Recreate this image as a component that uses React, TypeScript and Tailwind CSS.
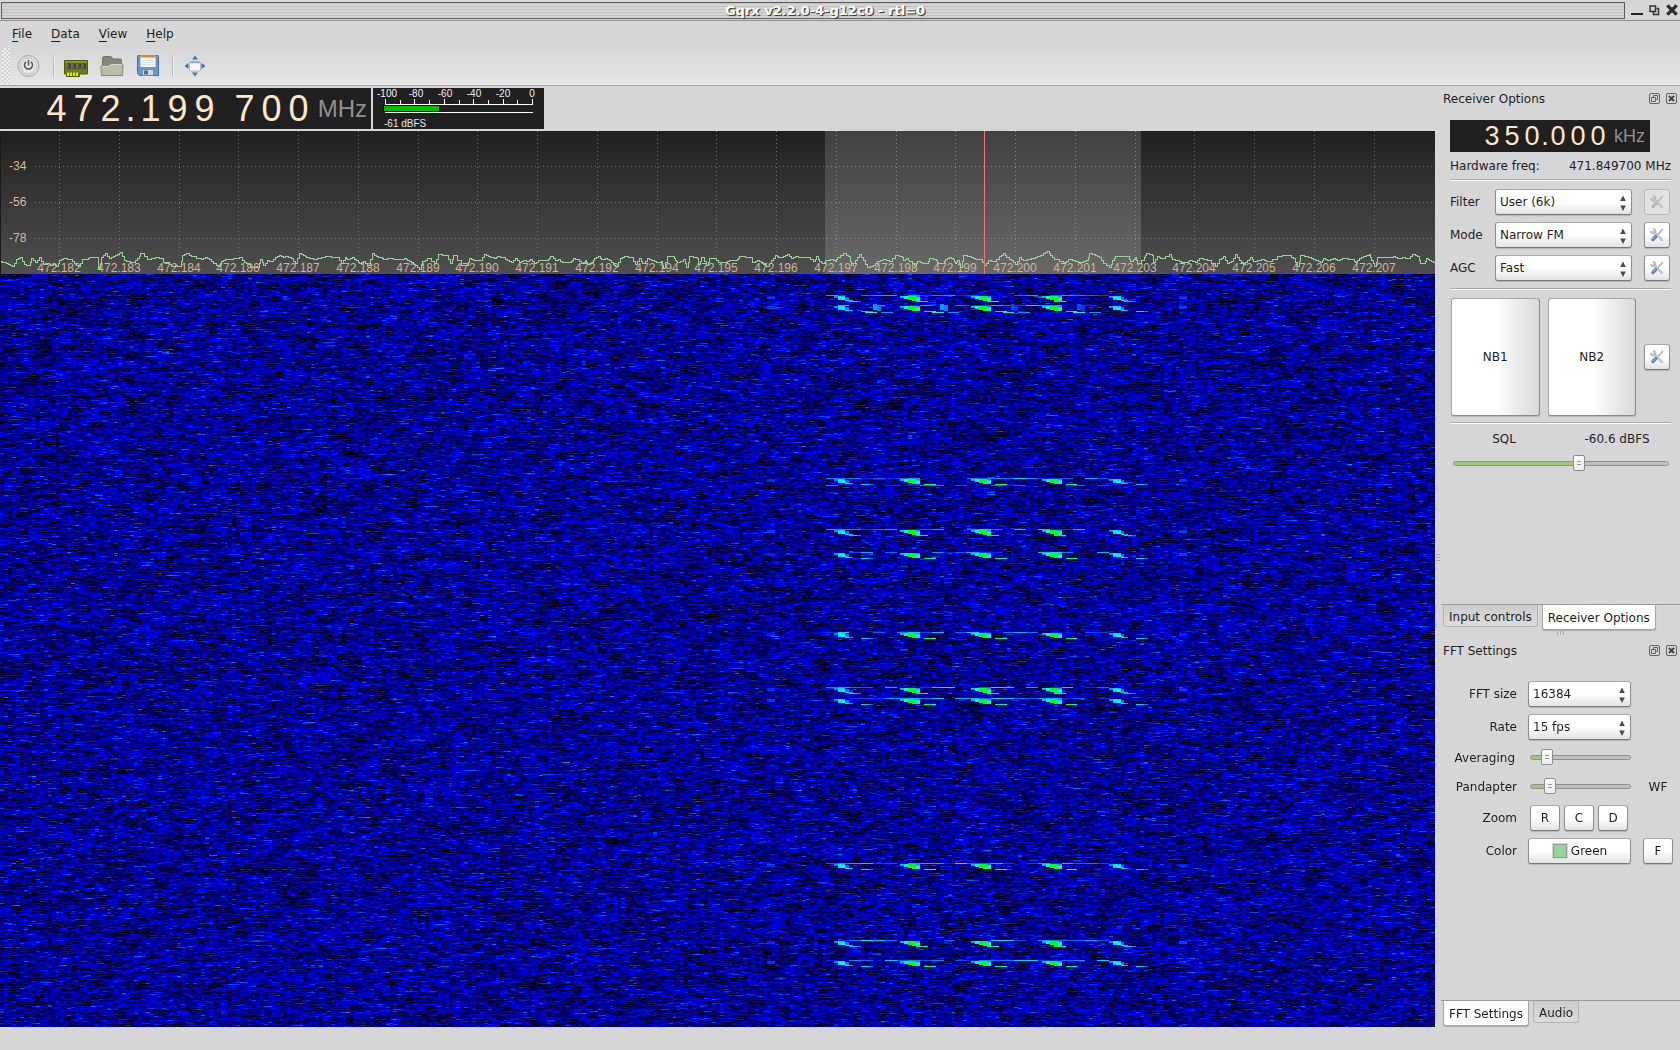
import React, { useEffect, useRef, useState } from "react";

/* ---------- spectrum trace ---------- */
type Segment = { x: number; y: number; pts: string };

const SEGMENTS: Segment[] = [
  {
    x: 0,
    y: -1,
    pts: "0,392 12,396 24,402 36,407 48,388 60,382 72,402 84,405 94,385 106,395 118,380 130,403 142,400 150,405 158,402 168,408 178,390 190,385 210,388 222,398 234,408 246,388 260,386 268,380 290,382 293,415 304,382 316,370 326,383 340,377 352,372 360,367 371,390 380,392 400,396 412,385 421,370 440,388 452,384 466,380 488,388 490,395 500,396 512,408 524,406 536,408 546,375 558,370 572,378 604,388 616,382 628,388 640,398 654,408 662,394 676,388 700,384 716,382 732,396 744,402 756,410 770,412 780,386 790,406 800,390 812,392 824,380 836,375 848,382 856,378 872,384 884,400 896,370 908,374 918,380 932,384 942,388 952,384 974,378 1008,382 1022,400 1034,380 1042,386 1056,380 1068,390 1078,400 1090,392 1102,406 1116,370 1128,378 1140,380 1150,388 1162,384 1198,388 1212,384 1222,390 1234,396 1246,404 1258,418 1266,392 1280,384 1302,400 1314,372 1336,376 1350,400 1360,376 1382,405 1400,404 1408,384 1420,390",
  },
  {
    x: 460,
    y: 104,
    pts: "60,76 72,58 84,62 96,66 104,68 110,62 126,66 140,74 154,80 164,68 176,80 188,74 204,78 210,72 222,84 234,76 264,72 270,62 284,74 294,72 306,80 334,78 340,68 350,72 362,84 376,74 382,88 392,80 402,70 414,64 424,72 434,70 446,76 460,84 466,92 480,68 492,62 514,66 524,88 538,70 546,84 560,70 574,76 588,82 604,78 608,98 620,64 640,62 644,76 652,80 668,72 678,96 688,64 710,70 714,88 724,66 738,90 748,68 762,70 774,80 796,82 808,76 830,72 838,64 872,66 876,80 890,74 902,82 914,90 920,92 932,74 944,60 954,66 968,62 980,58 992,68 1006,64",
  },
  {
    x: 800,
    y: 109,
    pts: "0,50 18,52 38,62 48,48 58,62 66,70 76,60 90,58 104,62 112,50 130,38 144,48 154,74 164,60 178,42 190,60 202,80 220,76 232,64 248,56 268,62 284,44 306,50 308,60 318,54 328,62 342,76 352,62 366,70 378,68 388,54 408,60 414,70 430,68 436,58 446,50 458,58 464,70 472,60 480,80 490,44 512,52 524,56 540,58 552,76 564,60 580,62 598,48 610,38 618,52 632,60 644,72 656,50 668,60 692,54 704,50 712,48 730,40 740,34 750,44 762,58 790,66 804,56 824,62 840,66 858,60 866,40 884,46 898,52 910,68 926,80 936,60 944,48 980,48 990,64 1004,52 1010,68 1032,50 1038,38 1056,44 1060,66 1070,48",
  },
  {
    x: 1160,
    y: 104,
    pts: "0,70 26,58 36,72 50,74 62,80 78,82 88,76 104,82 118,70 140,74 166,92 176,72 190,64 202,84 214,78 224,58 236,74 250,86 262,76 270,66 280,78 292,74 304,72 318,78 350,64 366,60 386,60 400,68 410,92 420,60 444,66 460,72 468,76 480,80 490,68 502,74 520,68 530,74 546,70 578,72 586,82 596,70 608,62 626,58 634,76 642,92 652,66 700,64 710,70 726,66 742,70 756,56 770,62 780,84 792,84 798,68 808,76 820,82 828,82",
  },
];

const tracePath = (() => {
  let d = "";
  let lastX = 0;
  let lastY = 0;
  for (const s of SEGMENTS) {
    for (const p of s.pts.split(" ")) {
      const [u, v] = p.split(",").map(Number);
      const x = Math.round(s.x + u / 3) + 0.5;
      const y = Math.round(s.y + v / 3) + 0.5;
      if (!d) d = `M${x} ${y}`;
      else {
        const mid = Math.floor((lastX + x) / 2) + 0.5;
        const half = Math.floor((lastY + y) / 2) + 0.5;
        d += `H${mid}V${half}H${x}V${y}`;
      }
      lastX = x;
      lastY = y;
    }
  }
  return d;
})();

const FREQS = [
  182, 183, 184, 186, 187, 188, 189, 190, 191, 192, 194, 195, 196, 197, 198,
  199, 200, 201, 203, 204, 205, 206, 207,
];

function Pandapter() {
  return (
    <svg
      className="block h-[143px] w-full shrink-0 font-['Liberation_Sans',sans-serif] text-[12px]"
      role="img"
      aria-label="Spectrum"
    >
      <defs>
        <linearGradient id="pan" x1="0" y1="0" x2="0" y2="1">
          <stop offset="0" stopColor="#202020" />
          <stop offset="1" stopColor="#4f4f4f" />
        </linearGradient>
      </defs>
      <rect width="100%" height="143" fill="url(#pan)" />
      <rect width="1" height="143" fill="#1a1a1a" />
      {FREQS.map((f, i) => {
        const x = Math.round(59 + i * 59.75) + 0.5;
        return (
          <line key={f} x1={x} x2={x} y1="0" y2="127" stroke="#777" strokeDasharray="1 3" />
        );
      })}
      {[-34, -56, -78].map((v, i) => (
        <g key={v}>
          <line x1="35" x2="100%" y1={35.5 + i * 36} y2={35.5 + i * 36} stroke="#777" strokeDasharray="1 3" />
          <text x="9" y={39 + i * 36} fill="#d8b89c">{v}</text>
        </g>
      ))}
      <rect x="825" width="316" height="143" fill="#fff" fillOpacity=".15" />
      {FREQS.map((f, i) => (
        <text key={f} x={Math.round(59 + i * 59.75)} y="141" textAnchor="middle" fill="#d0b299">
          472.{f}
        </text>
      ))}
      <path d={tracePath} fill="none" stroke="#97d597" shapeRendering="crispEdges" />
      <line x1="984.5" x2="984.5" y1="0" y2="143" stroke="#ff7171" />
    </svg>
  );
}

/* ---------- waterfall ---------- */
const CELL = 3.93;
const BURSTS = [22, 32, 205, 256, 279, 359, 414, 425, 590, 667, 687];
const CARRIERS = [
  { x: 836, strong: false },
  { x: 902, strong: true },
  { x: 971, strong: true },
  { x: 1041, strong: true },
  { x: 1111, strong: false },
];
const STRONG = [
  [1.8, 2.2, 2.9, 2.9, 1.6],
  [1.6, 2.1, 3, 3, 1.8],
  [0, 1.9, 3, 3.1, 2.2],
  [0, 0, 2.9, 3.1, 2.2],
  [0, 0, 0, 2.9, 2.6],
];
const WEAK = [
  [1.6, 1.9, 1.8, 0, 0],
  [1.5, 2, 1.9, 1.4, 0],
  [0, 1.9, 2, 1.5, 0],
  [0, 1.8, 2, 1.6, 0],
  [0, 0, 0, 1.9, 1.7],
];

function palette(v: number): [number, number, number] {
  if (v <= 0) return [0, 0, 0];
  if (v < 1) return [0, 0, 255 * v];
  if (v < 2) return [0, 255 * (v - 1), 255];
  if (v < 3) return [0, 255, 255 * (3 - v)];
  return [Math.min(255, 255 * (v - 3)), 255, 0];
}

function drawWaterfall(canvas: HTMLCanvasElement) {
  const w = canvas.clientWidth;
  const h = canvas.clientHeight;
  if (!w || !h) return;
  canvas.width = w;
  canvas.height = h;
  const ctx = canvas.getContext("2d");
  if (!ctx) return;
  let seed = 4721997;
  const rnd = () => {
    seed = (seed + 0x6d2b79f5) | 0;
    let t = Math.imul(seed ^ (seed >>> 15), 1 | seed);
    t = (t + Math.imul(t ^ (t >>> 7), 61 | t)) ^ t;
    return ((t ^ (t >>> 14)) >>> 0) / 4294967296;
  };
  const cols = Math.ceil(w / CELL) + 1;
  const levels = new Float32Array(cols * h);
  for (let y = 0; y < h; y++) {
    let prev = 0;
    for (let c = 0; c < cols; c++) {
      const g = rnd() + rnd() + rnd() - 1.5;
      prev = prev * 0.35 + g;
      levels[y * cols + c] = 0.56 + 0.56 * prev;
    }
  }
  const put = (x: number, y: number, v: number, n = 1) => {
    const c = Math.floor(x / CELL);
    for (let i = 0; i < n; i++) {
      if (c + i < cols && y >= 0 && y < h) levels[y * cols + c + i] = v;
    }
  };
  BURSTS.forEach((y, b) => {
    for (let x = 826; x < 1105; x += CELL * 3) {
      if (rnd() < 0.72) put(x, y - 1, 1.1 + rnd() * 0.8, 3);
      if (b === 2 && rnd() < 0.5) put(x, y + 6, 1.1 + rnd() * 0.5, 3);
    }
    CARRIERS.forEach(({ x, strong }) => {
      (strong ? STRONG : WEAK).forEach((row, r) =>
        row.forEach((v, i) => {
          if (v) put(x + 1 + i * CELL, y + r, v);
        }),
      );
      const tail = b % 3 === 0 ? 16 : 25;
      put(x + tail, y + 5, strong ? 2.8 : 1.8, 2);
      put(x + tail + CELL * 2, y + 5, strong ? 2.2 : 1.5, 1);
    });
    for (const x of [770, 1181]) {
      for (let r = 0; r < 3; r++) put(x, y + r, 1.1 + rnd() * 0.2, 2);
    }
  });
  for (const x of [874, 941, 1011, 1080]) {
    for (let r = 0; r < 6; r++) {
      put(x, 30 + r, x > 1000 ? 1.3 : 1.6);
      put(x + CELL, 31 + r, x > 1000 ? 1.2 : 1.5);
    }
    put(x - 6, 38, 1.8 + rnd() * 0.9, 3);
    put(x + 10, 38, 1.6, 3);
  }
  const img = ctx.createImageData(w, h);
  for (let y = 0; y < h; y++) {
    for (let x = 0; x < w; x++) {
      const [r, g, b] = palette(levels[y * cols + Math.floor(x / CELL)]);
      const i = (y * w + x) * 4;
      img.data[i] = r;
      img.data[i + 1] = g;
      img.data[i + 2] = b;
      img.data[i + 3] = 255;
    }
  }
  ctx.putImageData(img, 0, 0);
}

function Waterfall() {
  const ref = useRef<HTMLCanvasElement>(null);
  useEffect(() => {
    const draw = () => ref.current && drawWaterfall(ref.current);
    draw();
    window.addEventListener("resize", draw);
    return () => window.removeEventListener("resize", draw);
  }, []);
  return (
    <canvas
      ref={ref}
      aria-label="Waterfall"
      className="block min-h-0 w-full flex-1 basis-0 bg-[#0000a0]"
    />
  );
}

/* ---------- frequency displays ---------- */
function MainFrequency() {
  const groups = ["472", "199", "700"];
  return (
    <div className="flex w-[371px] items-center justify-end bg-[#202020] pr-1 font-['Liberation_Sans',sans-serif] text-[36px] leading-[41px] text-[#ffe6c8]">
      {groups.map((g, gi) => (
        <React.Fragment key={g}>
          {g.split("").map((d, i) => (
            <span key={i} className="w-[27px] text-center">{d}</span>
          ))}
          {gi === 0 && <span className="flex w-[13px] justify-center">.</span>}
          {gi === 1 && <span className="w-[13px]" />}
        </React.Fragment>
      ))}
      <span className="w-[55px] text-right text-[24px] text-[#8f8f92]">MHz</span>
    </div>
  );
}

function SignalMeter() {
  return (
    <svg
      className="h-[41px] w-[171px] bg-[#202020] font-['Liberation_Sans',sans-serif] text-[10px]"
      role="img"
      aria-label="Signal level -61 dBFS"
    >
      {[-100, -80, -60, -40, -20, 0].map((v, i) => (
        <text key={v} x={[14, 43, 72, 101, 130, 159][i]} y="9" textAnchor="middle" fill="#f0f0f0">
          {v}
        </text>
      ))}
      {Array.from({ length: 11 }, (_, i) => {
        const x = Math.round(12 + i * 14.7) + 0.5;
        return <line key={i} x1={x} x2={x} y1={i % 2 ? 12 : 11} y2="17" stroke="#fff" />;
      })}
      <path d="M12 16.5H160M12 24.5H160" stroke="#fff" />
      <rect x="10.5" y="17.5" width="56" height="6" fill="#00c000" stroke="#000" />
      <text x="11" y="39" fill="#e8e8e8">-61 dBFS</text>
    </svg>
  );
}

/* ---------- controls ---------- */
const RAISED =
  "border border-[#8e8e8e] border-t-[#a8a8a8] border-b-[#777] rounded-[3px] bg-linear-to-b from-white from-50% to-[#e2e2e2] shadow-[0_1px_1px_#b4b4b4]";

function Combo({ id, options }: { id: string; options: string[] }) {
  return (
    <span className="relative block w-full">
      <select
        id={id}
        className={`${RAISED} block h-[26px] w-full appearance-none pr-5 pl-1 text-[12px]`}
      >
        {options.map((o) => (
          <option key={o}>{o}</option>
        ))}
      </select>
      <svg className="pointer-events-none absolute top-[6px] right-[6px] h-4 w-[6px]" viewBox="0 0 6 16">
        <path d="M3 0.500L5.800 6H.2ZM3 16L.2 10.500H5.800Z" fill="#4a4a4a" />
      </svg>
    </span>
  );
}

function ToolButton({ label, disabled = false }: { label: string; disabled?: boolean }) {
  return (
    <button
      type="button"
      aria-label={label}
      disabled={disabled}
      className={
        disabled
          ? "flex size-[26px] items-center justify-center rounded-[3px] border border-[#b8b8b8] bg-[#e2e2e2]"
          : `${RAISED} flex size-[26px] items-center justify-center`
      }
    >
      <svg width="14" height="14" viewBox="0 0 14 14" fill="none" strokeLinecap="round">
        <path d="M3.500 3.500L11.800 11.800" stroke="#b3b5b2" strokeWidth="2.400" />
        <path d="M3.500 3.500L11.800 11.800" stroke="#dfe0de" strokeWidth="1" />
        <path d="M3.300 1A2.300 2.300 0 1 1 1 3.300" stroke="#b9bbb8" strokeWidth="1.600" />
        <path d="M12.500 1.500L7 7.500" stroke="#bfc1bd" strokeWidth="1.900" />
        <path d="M5.500 8.800L3 11.400" stroke={disabled ? "#b0b0b0" : "#4a78b2"} strokeWidth="3.400" />
        <path d="M5.300 8.700L2.800 11.200" stroke={disabled ? "#c6c6c6" : "#86abd6"} strokeWidth="1.300" />
      </svg>
    </button>
  );
}

function Slider({ id, label, initial }: { id: string; label?: string; initial: number }) {
  const [value, setValue] = useState(initial);
  return (
    <input
      id={id}
      aria-label={label}
      type="range"
      value={value}
      onChange={(e) => setValue(Number(e.target.value))}
      style={{ "--fill": `${value}%` } as React.CSSProperties}
      className="block h-4 w-full appearance-none bg-transparent [&::-webkit-slider-runnable-track]:h-[5px] [&::-webkit-slider-runnable-track]:rounded-[3px] [&::-webkit-slider-runnable-track]:border [&::-webkit-slider-runnable-track]:border-[#909090] [&::-webkit-slider-runnable-track]:bg-[linear-gradient(to_right,#9fca7c_var(--fill),#bebebe_var(--fill))] [&::-webkit-slider-thumb]:-mt-[7px] [&::-webkit-slider-thumb]:h-4 [&::-webkit-slider-thumb]:w-3 [&::-webkit-slider-thumb]:appearance-none [&::-webkit-slider-thumb]:rounded-[2px] [&::-webkit-slider-thumb]:border [&::-webkit-slider-thumb]:border-[#8e8e8e] [&::-webkit-slider-thumb]:bg-[linear-gradient(#999,#999),linear-gradient(#999,#999),linear-gradient(#fff,#ececec)] [&::-webkit-slider-thumb]:bg-[length:4px_1px,4px_1px,100%_100%] [&::-webkit-slider-thumb]:bg-[position:3px_5px,3px_8px,0_0] [&::-webkit-slider-thumb]:bg-no-repeat"
    />
  );
}

function Rule() {
  return <hr className="h-[2px] border-t border-b border-t-[#aaaaaa] border-b-white" />;
}

function DockTitle({ children }: { children: string }) {
  return (
    <div className="flex h-[21px] items-center gap-[6px] pr-[3px] pl-[2px]">
      <h2 className="flex-1">{children}</h2>
      <button type="button" aria-label={`Float ${children}`}>
        <svg width="11" height="11" viewBox="0 0 11 11" fill="none" stroke="#636363">
          <rect x=".5" y=".5" width="10" height="10" rx="1.500" />
          <path d="M4.500 4.500V2.500H8.500V6.500H6.500M2.500 4.500H6.500V8.500H2.500Z" />
        </svg>
      </button>
      <button type="button" aria-label={`Close ${children}`}>
        <svg width="11" height="11" viewBox="0 0 11 11" fill="none" stroke="#636363">
          <rect x=".5" y=".5" width="10" height="10" rx="1.500" />
          <path d="M3 3L8 8M8 3L3 8" stroke="#444" strokeWidth="2" />
        </svg>
      </button>
    </div>
  );
}

function Tabs({ tabs, active }: { tabs: string[]; active: string }) {
  return (
    <div role="tablist" className="flex h-[27px] items-start gap-1 border-t border-[#9a9a9a] pl-[2px]">
      {tabs.map((t) =>
        t === active ? (
          <button
            key={t}
            type="button"
            role="tab"
            aria-selected="true"
            className="h-[25px] rounded-b-[3px] border border-t-0 border-[#a6a6a6] bg-white px-[5px] pt-px shadow-[0_1px_1px_#aaa]"
          >
            {t}
          </button>
        ) : (
          <button
            key={t}
            type="button"
            role="tab"
            aria-selected="false"
            className="h-[22px] rounded-b-[3px] border border-t-0 border-[#b2b2b2] bg-linear-to-b from-[#cbcbcb] to-[#dcdcdc] px-[5px] pt-[2px]"
          >
            {t}
          </button>
        ),
      )}
    </div>
  );
}

function ReceiverOptions() {
  const rows = [
    { id: "filter", label: "Filter", options: ["User (6k)"], disabled: true },
    { id: "mode", label: "Mode", options: ["Narrow FM"], disabled: false },
    { id: "agc", label: "AGC", options: ["Fast"], disabled: false },
  ];
  return (
    <section className="flex grow basis-[543px] flex-col">
      <DockTitle>Receiver Options</DockTitle>
      <div className="flex flex-1 flex-col pt-[11px] pr-[9px] pl-[9px]">
        <div className="mr-[21px] flex h-8 items-center justify-end bg-[#202020] pr-[5px] font-['Liberation_Sans',sans-serif] text-[27px] text-[#ffe6c8]">
          {"350.000".split("").map((d, i) =>
            d === "." ? (
              <span key={i} className="flex w-[6px] justify-center">.</span>
            ) : (
              <span key={i} className="w-5 text-center">{d}</span>
            ),
          )}
          <span className="w-[37px] text-right text-[18px] text-[#8f8f92]">kHz</span>
        </div>
        <div className="flex h-[27px] items-center justify-between">
          <span>Hardware freq:</span>
          <span>471.849700 MHz</span>
        </div>
        <Rule />
        <div className="mt-[8px] mb-[7px] grid grid-cols-[45px_1fr_26px] items-center gap-y-[7px] pr-px">
          {rows.map((r) => (
            <React.Fragment key={r.id}>
              <label htmlFor={r.id}>{r.label}</label>
              <span className="pr-3"><Combo id={r.id} options={r.options} /></span>
              <ToolButton label={`${r.label} options`} disabled={r.disabled} />
            </React.Fragment>
          ))}
        </div>
        <Rule />
        <div className="mt-2 mb-[6px] flex items-center gap-2 pr-px pl-px">
          {["NB1", "NB2"].map((n) => (
            <button
              key={n}
              type="button"
              className="h-[118px] flex-1 rounded-[3px] border border-[#8a8a8a] border-t-[#a8a8a8] border-l-[#a8a8a8] bg-linear-to-r from-white from-50% to-[#d9d9d9] shadow-[0_1px_1px_#b4b4b4]"
            >
              {n}
            </button>
          ))}
          <ToolButton label="Noise blanker options" />
        </div>
        <Rule />
        <div className="flex h-[30px] items-center">
          <label htmlFor="squelch" className="w-[108px] text-center">SQL</label>
          <output htmlFor="squelch" className="flex-1 pl-[5px] text-center">-60.6 dBFS</output>
        </div>
        <div className="pt-px pr-[2px] pl-[3px]">
          <Slider id="squelch" initial={59} />
        </div>
      </div>
      <Tabs tabs={["Input controls", "Receiver Options"]} active="Receiver Options" />
    </section>
  );
}

function FftSettings() {
  return (
    <section className="flex grow basis-[387px] flex-col">
      <DockTitle>FFT Settings</DockTitle>
      <div className="grid flex-1 grid-cols-[76px_103px_32px] content-start items-center gap-x-[11px] pt-[16px]">
        <label htmlFor="fftsize" className="text-right">FFT size</label>
        <div className="flex h-[33px] items-center"><Combo id="fftsize" options={["16384"]} /></div>
        <span />
        <label htmlFor="rate" className="text-right">Rate</label>
        <div className="flex h-[33px] items-center"><Combo id="rate" options={["15 fps"]} /></div>
        <span />
        <label htmlFor="avg" className="pr-[2px] text-right">Averaging</label>
        <div className="flex h-[29px] items-center pl-[2px]"><Slider id="avg" initial={11} /></div>
        <span />
        <label htmlFor="pan-split" className="text-right">Pandapter</label>
        <div className="flex h-[29px] items-center pl-[2px]"><Slider id="pan-split" initial={15} /></div>
        <span className="text-center">WF</span>
        <span className="text-right">Zoom</span>
        <div className="flex h-[33px] items-center gap-1 pl-[2px]">
          {["R", "C", "D"].map((z) => (
            <button key={z} type="button" className={`${RAISED} h-[26px] w-[30px]`}>{z}</button>
          ))}
        </div>
        <span />
        <span className="text-right">Color</span>
        <div className="flex h-[33px] items-center">
          <button type="button" className={`${RAISED} flex h-[26px] w-full items-center justify-center gap-[3px]`}>
            <span className="size-4 bg-[#d6d6d6] p-px">
              <span className="block size-full border border-[#999] bg-[#98d49a]" />
            </span>
            Green
          </button>
        </div>
        <button type="button" className={`${RAISED} mx-auto h-[26px] w-[30px]`}>F</button>
      </div>
      <Tabs tabs={["FFT Settings", "Audio"]} active="FFT Settings" />
    </section>
  );
}

/* ---------- window chrome ---------- */
function TitleBar() {
  return (
    <header className="flex h-[21px] items-center border-b border-[#8e8e8e] pr-[2px] pl-px">
      <h1 className="h-[17px] flex-1 border border-[#5c5c5c] bg-[repeating-linear-gradient(to_bottom,#c2c2c2_0_1px,#d4d4d4_1px_3px)] pl-6 text-center text-[13px] leading-[15px] font-bold text-white [text-shadow:1px_1px_0_#444,1px_1px_1px_#555]">
        Gqrx v2.2.0-4-g12c0 - rtl=0
      </h1>
      <div className="flex w-[53px] items-center justify-end gap-[6px]">
        <button type="button" aria-label="Minimize">
          <svg width="12" height="12" viewBox="0 0 12 12"><path d="M0 9H12V11H0Z" fill="#222" /></svg>
        </button>
        <button type="button" aria-label="Restore">
          <svg width="11" height="12" viewBox="0 0 11 12" fill="none" stroke="#333" strokeWidth="1.500">
            <path d="M1 2H6.500V7.500H1ZM7.500 4.500H9.500V10.500H4.500V8" />
          </svg>
        </button>
        <button type="button" aria-label="Close">
          <svg width="12" height="12" viewBox="0 0 12 12" stroke="#2c2c2c" strokeWidth="3.200">
            <path d="M1.300 1.300L10.700 10.700M10.700 1.300L1.300 10.700" />
          </svg>
        </button>
      </div>
    </header>
  );
}

function Toolbar() {
  return (
    <div className="flex h-10 items-center border-b border-[#a4a4a4] bg-linear-to-b from-[#d6d6d6] to-[#e6e6e6] pl-[2px]">
      <div className="h-9 w-2 bg-[conic-gradient(#eee_25%,#d3d3d3_0_50%,#eee_0_75%,#d3d3d3_0)] bg-[length:4px_4px]" />
      <button type="button" aria-label="Start DSP" className="ml-[7px]">
        <svg width="24" height="24" viewBox="0 0 24 24" fill="none">
          <circle cx="11.500" cy="12" r="10.500" fill="#dcdcdc" stroke="#a9a9a9" />
          <circle cx="11.500" cy="12" r="8" fill="#e4e4e4" stroke="#c4c4c4" />
          <path d="M9 7.900A4 4 0 1 0 14 7.900M11.500 6V11.500" stroke="#555" strokeWidth="1.500" />
        </svg>
      </button>
      <span className="ml-3 h-[22px] w-px bg-[#b8b8b8] shadow-[1px_0_0_#f2f2f2]" />
      <button type="button" aria-label="Configure I/O devices" className="ml-[10px]">
        <svg width="24" height="24" viewBox="0 0 24 24">
          <path d="M.5 6.500H23.500V20H15.500V22.500H2.500V20H.5Z" fill="#707b12" stroke="#4e5a08" />
          <path d="M1 7H23V8.500H1Z" fill="#93a01e" />
          <path d="M3 9.500H7V15H3ZM8 9.500H12V15H8ZM13 9.500H17V15H13ZM18 9.500H22V15H18Z" fill="#3e4145" />
          <path d="M3.500 10H4.500V14.500H3.500ZM8.500 10H9.500V14.500H8.500ZM13.500 10H14.500V14.500H13.500ZM18.500 10H19.500V14.500H18.500Z" fill="#77807c" />
          <path d="M3 18.500H5V22H3ZM6 18.500H8V22H6ZM9 18.500H11V22H9ZM12 18.500H14V22H12Z" fill="#dcec15" />
        </svg>
      </button>
      <button type="button" aria-label="Open settings" className="ml-3">
        <svg width="24" height="24" viewBox="0 0 24 24">
          <path d="M2.500 20V4.500Q2.500 2.500 4.500 2.500H10.500Q12 2.500 12.500 5H20.500Q21.500 5 21.500 6.500V20Z" fill="#84877a" stroke="#6b6e62" />
          <path d="M1.500 21.500L1 13Q1 11.500 2.500 11.500H8L11 9.500H21.500Q23 9.500 23 11L22.500 21.500Z" fill="#b9bda9" stroke="#85897a" />
          <path d="M2 12.500H8.500L11.500 10.500H22" fill="none" stroke="#d5d8c9" />
        </svg>
      </button>
      <button type="button" aria-label="Save settings" className="ml-3">
        <svg width="24" height="24" viewBox="0 0 24 24">
          <path d="M2.500 1.500H21.500Q22.500 1.500 22.500 2.500V21.500H3.500L1.500 19.500V2.500Q1.500 1.500 2.500 1.500Z" fill="#6699d3" stroke="#3f6fa8" />
          <path d="M4.500 1H19.500V13H4.500Z" fill="#f7f7f7" />
          <path d="M4.500 1H19.500V3.500H4.500Z" fill="#f08020" />
          <path d="M6 6.500H18M6 8.500H18M6 10.500H18" stroke="#dedede" />
          <path d="M6.500 15.500H17.500V21.500H6.500Z" fill="#d3d5d6" stroke="#7e8a96" />
          <path d="M8 16.500H12V20.500H8Z" fill="#4e6f94" />
        </svg>
      </button>
      <span className="ml-3 h-[22px] w-px bg-[#b8b8b8] shadow-[1px_0_0_#f2f2f2]" />
      <button type="button" aria-label="Full screen" className="ml-[10px]">
        <svg width="24" height="24" viewBox="0 0 24 24">
          <path d="M12 1.500L15 5.500H9ZM12 22.500L9 18.500H15ZM1.500 12L5.500 9V15ZM22.500 12L18.500 15V9Z" fill="#4473b0" />
          <rect x="6.500" y="7.500" width="11" height="9.500" rx="1" fill="#f6f6f6" stroke="#b3b7bc" />
          <path d="M7 8.500H17" stroke="#86a8d4" strokeWidth="1.500" />
        </svg>
      </button>
    </div>
  );
}

export default function App() {
  return (
    <div className="flex min-h-screen flex-col bg-[#d6d6d6] font-['DejaVu_Sans',sans-serif] text-[12px] leading-4 text-[#1e1e1e]">
      <TitleBar />
      <nav className="flex h-[25px] items-center gap-px pl-[3px]" aria-label="Menu">
        {["File", "Data", "View", "Help"].map((m) => (
          <button key={m} type="button" className="px-[9px]">
            <span className="underline underline-offset-[3px]">{m[0]}</span>
            {m.slice(1)}
          </button>
        ))}
      </nav>
      <Toolbar />
      <div className="flex flex-1 pt-[2px]">
        <main className="flex min-w-0 flex-1 flex-col">
          <div className="mb-[2px] flex h-[41px] gap-[2px]">
            <MainFrequency />
            <SignalMeter />
          </div>
          <Pandapter />
          <Waterfall />
        </main>
        <div className="flex w-[6px] items-center justify-center">
          <span className="h-[7px] w-1 bg-[repeating-linear-gradient(to_bottom,#aaa_0_1px,transparent_1px_3px)]" />
        </div>
        <aside className="flex w-[239px] shrink-0 flex-col">
          <ReceiverOptions />
          <div className="flex h-[9px] items-start justify-center">
            <span className="h-1 w-[7px] bg-[repeating-linear-gradient(to_right,#aaa_0_1px,transparent_1px_3px)]" />
          </div>
          <FftSettings />
        </aside>
      </div>
      <footer className="h-[23px]" />
    </div>
  );
}
